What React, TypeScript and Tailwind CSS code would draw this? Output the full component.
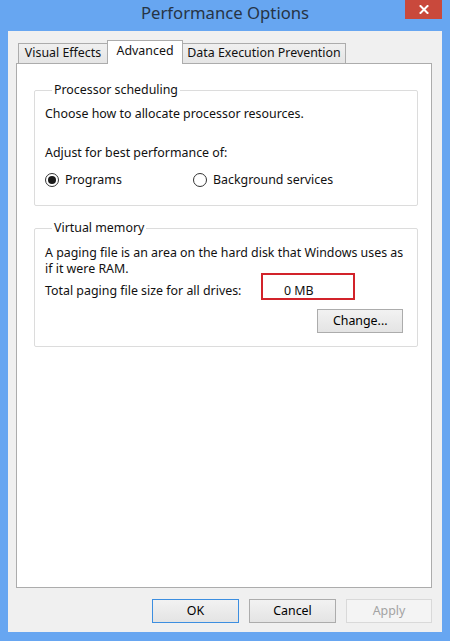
import React from 'react';

function Tab({ label, active = false, className = '' }: { label: string; active?: boolean; className?: string }) {
  if (active) {
    return (
      <div className={`relative z-10 h-[24px] -mb-[1px] pt-[2px] text-center bg-white border border-b-0 border-[#acacac] ${className}`}>
        {label}
      </div>
    );
  }
  return (
    <div className={`h-[20px] pt-[1px] text-center bg-gradient-to-b from-[#f0f0f0] to-[#e5e5e5] border border-b-0 border-[#acacac] ${className}`}>
      {label}
    </div>
  );
}

function Radio({ checked = false, label }: { checked?: boolean; label: string }) {
  return (
    <div className="flex items-center gap-[6px]">
      <span className="w-[14px] h-[14px] rounded-full border border-[#333] bg-white flex items-center justify-center">
        {checked && <span className="w-[8px] h-[8px] rounded-full bg-[#1a1a1a]" />}
      </span>
      <span>{label}</span>
    </div>
  );
}

function Button({ label, variant = 'normal', className = '' }: { label: string; variant?: 'normal' | 'default' | 'disabled'; className?: string }) {
  const styles = {
    normal: 'border-[#acacac] bg-gradient-to-b from-[#f2f2f2] to-[#e4e4e4] text-black',
    default: 'border-[#3c8ee0] bg-gradient-to-b from-[#f2f2f2] to-[#e4e4e4] text-black',
    disabled: 'border-[#d9d9d9] bg-[#f4f4f4] text-[#a3a3a3]'
  };
  return (
    <div className={`h-[24px] border flex items-center justify-center ${styles[variant]} ${className}`}>
      {label}
    </div>
  );
}

export default function App() {
  return (
    <div className="w-[450px] h-[641px] bg-[#67a6f1] flex flex-col text-[#111] text-[12.4px] leading-[16px] font-['Noto_Sans',sans-serif]">
      {/* Title bar */}
      <div className="relative h-[31px] shrink-0 flex items-center justify-center">
        <span className="text-[16.7px] leading-[20px] text-[#263445] -mt-[6px]">Performance Options</span>
        <div className="absolute right-[8px] top-0 w-[37px] h-[19px] bg-[#c9493c] flex items-center justify-center">
          <svg width="10" height="9" viewBox="0 0 10 9">
            <path d="M1.5 1 L8.5 8 M8.5 1 L1.5 8" stroke="white" strokeWidth="2" strokeLinecap="square" />
          </svg>
        </div>
      </div>

      {/* Client area */}
      <div className="flex-1 mx-[8px] mb-[9px] bg-[#f0f0f0] pt-[9px] pl-[8px] pr-[10px] flex flex-col">
        {/* Tabs */}
        <div className="flex items-end h-[23px] pl-[2px]">
          <Tab label="Visual Effects" className="w-[90px]" />
          <Tab label="Advanced" active className="-ml-[1px] w-[76px]" />
          <Tab label="Data Execution Prevention" className="-ml-[1px] w-[164px]" />
        </div>

        {/* Panel */}
        <div className="h-[525px] bg-white border border-[#acacac] pl-[17px] pr-[13px] pt-[18px]">
          <fieldset className="border border-[#dcdcdc] rounded-[2px] pl-[10px] pr-[14px] pb-[17px]">
            <legend className="ml-[7px] px-[2px]">Processor scheduling</legend>
            <div className="mt-[8px]">Choose how to allocate processor resources.</div>
            <div className="mt-[23px]">Adjust for best performance of:</div>
            <div className="mt-[11px] flex">
              <div className="w-[148px]">
                <Radio checked label="Programs" />
              </div>
              <Radio label="Background services" />
            </div>
          </fieldset>

          <fieldset className="mt-[14px] border border-[#dcdcdc] rounded-[2px] pl-[10px] pr-[14px] pb-[13px]">
            <legend className="ml-[7px] px-[2px]">Virtual memory</legend>
            <div className="mt-[9px] whitespace-nowrap">
              A paging file is an area on the hard disk that Windows uses as
              <br />
              if it were RAM.
            </div>
            <div className="relative mt-[6px] flex">
              <span>Total paging file size for all drives:</span>
              <span className="absolute left-[239px] top-0">0 MB</span>
              <div className="absolute left-[216px] -top-[10px] w-[94px] h-[27px] border-2 border-[#d2232a]" />
            </div>
            <div className="mt-[10px] flex justify-end">
              <Button label="Change..." className="w-[86px]" />
            </div>
          </fieldset>
        </div>

        {/* Dialog buttons */}
        <div className="mt-[11px] flex justify-end gap-[10px]">
          <Button label="OK" variant="default" className="w-[87px]" />
          <Button label="Cancel" className="w-[87px]" />
          <Button label="Apply" variant="disabled" className="w-[86px]" />
        </div>
      </div>
    </div>
  );
}
